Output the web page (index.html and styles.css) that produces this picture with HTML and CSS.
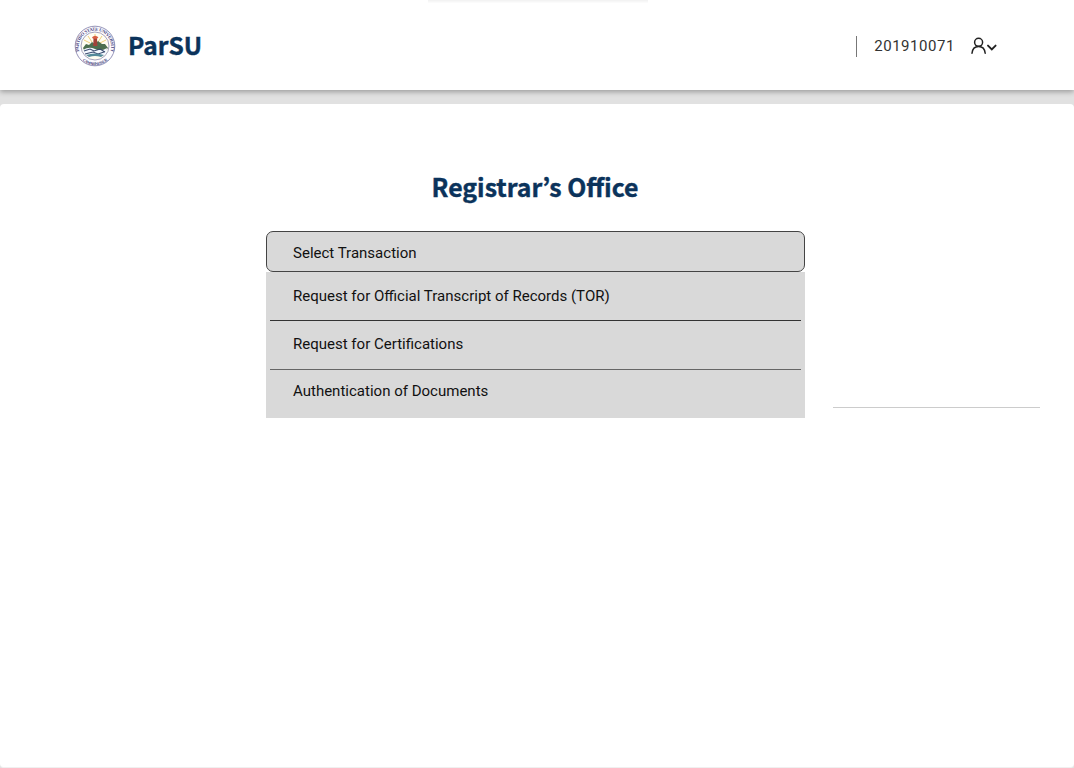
FILE: index.html
```
<!DOCTYPE html>
<html lang="en">
<head>
<meta charset="utf-8">
<title>ParSU Registrar’s Office</title>
<link rel="stylesheet" href="styles.css">
</head>
<body>
<header class="topbar">
  <div class="top-tab"></div>
  <div class="brand">
    <svg class="seal" viewBox="0 0 42 42">
      <defs>
        <path id="arc-top" d="M5.3 26.4 A16.3 16.3 0 1 1 36.7 26.4"/>
        <path id="arc-bottom" d="M6.5 33.5 A19.2 19.2 0 0 0 35.5 33.5"/>
      </defs>
      <circle cx="21" cy="21" r="19.8" fill="#fdfcff" stroke="#8b89b0" stroke-width=".9"/>
      <text class="seal-text"><textPath href="#arc-top" textLength="60">PARTIDO STATE UNIVERSITY</textPath></text>
      <text class="seal-text seal-text-small"><textPath href="#arc-bottom" startOffset="3" textLength="27">CAMARINES SUR</textPath></text>
      <circle cx="21" cy="21" r="14" fill="#fffdf2" stroke="#8e8bae" stroke-width=".8"/>
      <path d="M21 17V9M18 17l-4-6M24 17l4-6M16 18l-6-3M26 18l6-3" stroke="#f0cf7c" stroke-width="1"/>
      <path d="M9 23l3-4 3 1 3-3 3 2 3-3 4 3 3 0 3 4-2 2H10z" fill="#4d6f50"/>
      <path d="M19.5 13h3.5l.4 8h-4.2z" fill="#a2433a"/>
      <path d="M18 12.2q3-3 6.4 0l-1.4 1.5h-4z" fill="#d85f42"/>
      <path d="M9 25q6-4 12-1t12-1l-1 6q-5 3-10 1t-11 0z" fill="#f4f8ff"/>
      <path d="M10 26l6-2 4 2 6-2 5 3M11 29l8-2 5 2 6-2" fill="none" stroke="#3c4d72" stroke-width="1.1"/>
      <path d="M12 30q9-3 18 0l-3 2q-6-2-12 0z" fill="#548a9a"/>
    </svg>
    <span class="brand-name">ParSU</span>
  </div>
  <div class="account">
    <span class="account-rule"></span>
    <span class="account-id">201910071</span>
    <svg class="account-icon" viewBox="0 0 28 20">
      <circle cx="8.6" cy="6.3" r="4"/>
      <path d="M2 17.2C2.4 12.8 5 10.4 8.6 10.4s6.2 2.4 6.6 6.8"/>
      <path class="chevron" d="M18 9.6l3.8 3.8 3.8-3.8"/>
    </svg>
  </div>
</header>
<main class="panel">
  <h1 class="title">Registrar’s Office</h1>
  <div class="columns">
    <div class="dropdown">
      <div class="select">Select Transaction</div>
      <div class="options">
        <div class="option">Request for Official Transcript of Records (TOR)</div>
        <div class="option second">Request for Certifications</div>
        <div class="option last">Authentication of Documents</div>
      </div>
    </div>
    <div class="side-rule"></div>
  </div>
</main>
</body>
</html>
```
FILE: styles.css
```
* { box-sizing: border-box; }
body {
  margin: 0;
  height: 768px;
  overflow: hidden;
  background: #e1e1e1;
  color: #111;
  font-family: Roboto, "Liberation Sans", sans-serif;
}
.topbar {
  position: relative;
  display: flex;
  justify-content: space-between;
  height: 90px;
  padding: 0 76px 0 74px;
  background: #fff;
  box-shadow: 0 2px 5px rgba(0, 0, 0, .3);
}
.top-tab {
  position: absolute;
  top: 0;
  left: 428px;
  width: 220px;
  height: 3px;
  background: linear-gradient(#f1f1f1, #fdfdfd);
}
.brand { display: flex; align-items: center; height: 92px; }
.seal { width: 42px; height: 42px; }
.seal-text { font: bold 4.7px "Liberation Serif", serif; fill: #45427c; }
.seal-text-small { font-size: 4px; }
.brand-name {
  margin: 0 0 3px 12px;
  color: #0b335b;
  font: bold 24.5px/36px "Noto Sans CJK KR", sans-serif;
  -webkit-text-stroke: .4px #0b335b;
}
.account { display: flex; align-items: center; height: 92px; }
.account-rule { width: 1px; height: 21px; background: #777; }
.account-id {
  margin-left: 17px;
  color: #333;
  font-size: 15px;
  letter-spacing: .55px;
}
.account-icon {
  width: 28px;
  height: 20px;
  margin-left: 15px;
  fill: none;
  stroke: #222;
  stroke-width: 1.5;
  stroke-linecap: round;
}
.chevron { stroke-width: 1.9; }
.panel {
  height: 664px;
  margin-top: 14px;
  padding-top: 64px;
  border-bottom: 1px solid #f0f0f0;
  border-radius: 4px;
  background: #fff;
}
.title {
  margin: 0;
  padding-right: 4px;
  color: #0b335b;
  text-align: center;
  font: bold 24.8px/36px "Noto Sans CJK KR", sans-serif;
  -webkit-text-stroke: .4px #0b335b;
}
.columns { display: flex; margin: 27px 34px 0 266px; }
.dropdown { width: 539px; font-size: 15.03px; line-height: 20px; }
.select {
  height: 41px;
  padding: 11px 26px 0;
  border: 1px solid #444;
  border-radius: 7px;
  background: #d9d9d9;
}
.options { margin-left: .4px; padding: 0 4px; height: 146px; background: #d9d9d9; }
.option { height: 49px; padding: 14px 22.6px 0; border-bottom: 1px solid #333; }
.second { padding-top: 13px; border-color: #666; }
.last { border-bottom: 0; padding-top: 11px; }
.side-rule { width: 207px; height: 1px; margin: 176px 0 0 28px; background: #ccc; }
```
